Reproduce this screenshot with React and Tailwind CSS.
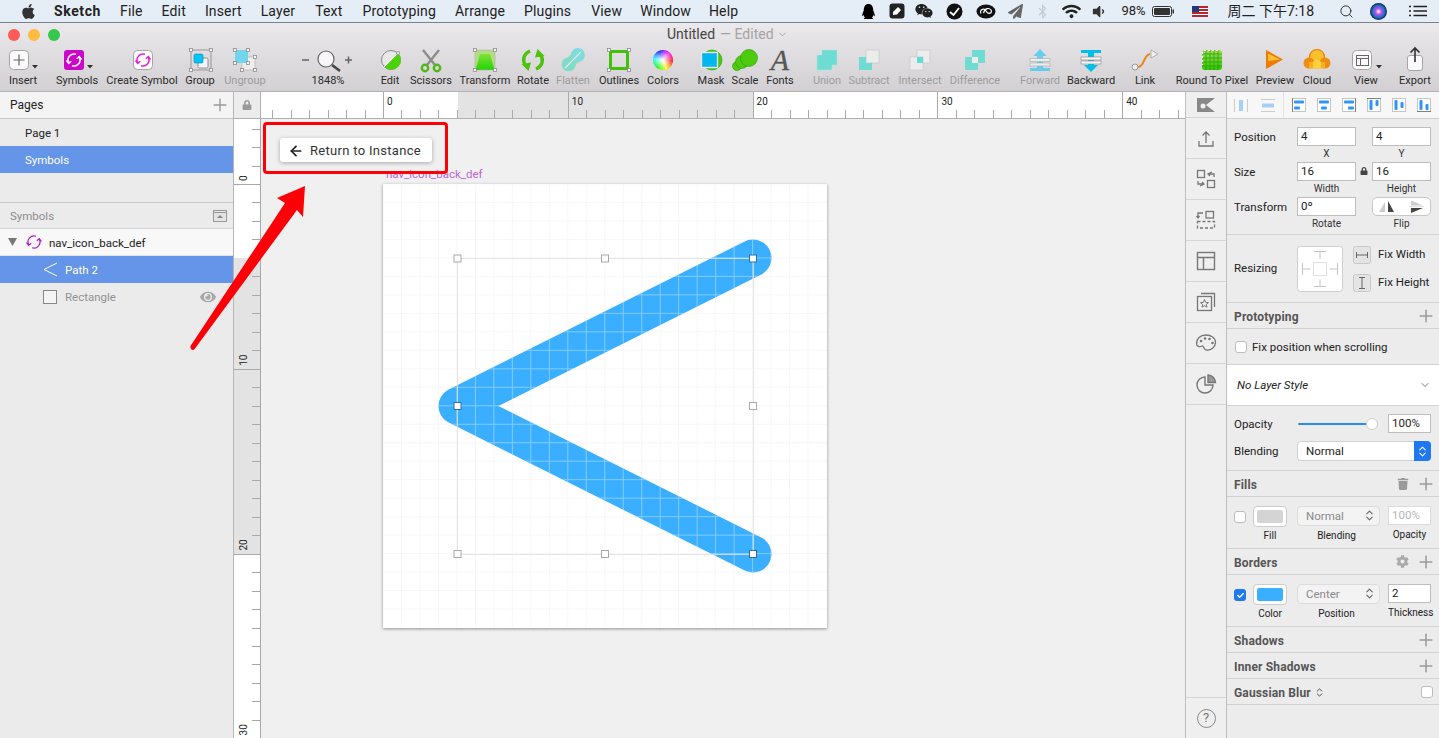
import React from "react";
import { FaApple, FaQq, FaWeixin, FaBluetoothB, FaPaperPlane, FaWifi, FaVolumeDown, FaTrash, FaCog, FaEye, FaLock, FaCheck } from "react-icons/fa";
import { Search, ArrowLeft, ChevronDown, Plus, ChevronsUpDown } from "lucide-react";

const Sync = ({ c = "#fff", w = 1.5 }) => (
  <g fill="none" stroke={c} strokeWidth={w}>
    <path d="M2 -5.7 A6 6 0 0 0 -5.4 2.5 M-7.5 0.5 L-5.3 3.4 L-2.800 1.200" />
    <path d="M-2 5.700 A6 6 0 0 0 5.400 -2.500 M7.500 -0.500 L5.300 -3.400 L2.800 -1.200" />
  </g>
);
const Tri = ({ x, y }) => <path d={`M${x - 3} ${y} h6 l-3 3.5z`} fill="#333" />;
const H = ({ x, y, s = 3 }) => <rect x={x - s / 2} y={y - s / 2} width={s} height={s} fill="#fff" stroke="#8a8a8a" strokeWidth="0.8" />;

const Ico = ({ children }) => (
  <svg width="40" height="26" viewBox="0 0 40 26" className="block shrink-0 overflow-visible">{children}</svg>
);

const wheel = Array.from({ length: 24 }, (_, i) => {
  const a0 = (i / 24) * 2 * Math.PI, a1 = ((i + 1.2) / 24) * 2 * Math.PI;
  return { d: `M20 12 L${20 + 10 * Math.cos(a0)} ${12 + 10 * Math.sin(a0)} A10 10 0 0 1 ${20 + 10 * Math.cos(a1)} ${12 + 10 * Math.sin(a1)}Z`, c: `hsl(${i * 15},95%,55%)` };
});

const icons = {
  insert: <Ico><rect x="6.5" y="2.5" width="19" height="19" rx="4" fill="#fbfbfb" stroke="#a5a5a5" /><path d="M16 6.5v11M10.5 12h11" stroke="#666" strokeWidth="1.2" /><Tri x={32} y={17} /></Ico>,
  symbols: <Ico><rect x="7" y="2" width="20" height="20" rx="3" fill="#cc07c9" /><g transform="translate(17 12)"><Sync /></g><Tri x={33} y={17} /></Ico>,
  create: <Ico><rect x="11.500" y="2.500" width="19" height="19" rx="4" fill="#fdfdfd" stroke="#a5a5a5" /><g transform="translate(21 12)"><Sync c="#e61fe0" /></g></Ico>,
  group: <Ico><rect x="11" y="2" width="20" height="20" fill="none" stroke="#888" strokeWidth="0.8" /><rect x="18" y="10" width="10" height="10" rx="1.5" fill="#f4f4f4" stroke="#777" strokeWidth="0.8" /><rect x="14" y="6" width="9" height="9" rx="1.5" fill="#00c6f8" stroke="#0a84a8" strokeWidth="0.6" /><H x={11} y={2} /><H x={31} y={2} /><H x={11} y={22} /><H x={31} y={22} /></Ico>,
  ungroup: <Ico><rect x="17" y="9" width="13" height="13" fill="#eeeeee" stroke="#bbb" strokeWidth="0.8" /><rect x="10" y="2" width="13" height="13" fill="#72d5ee" /><H x={10} y={2} /><H x={23} y={2} /><H x={23} y={15} /><H x={10} y={15} /><H x={30} y={9} /><H x={30} y={22} /><H x={17} y={22} /></Ico>,
  edit: <Ico><circle cx="21" cy="12" r="9.5" fill="#e8e8e8" stroke="#8a8a8a" /><path d="M28 5.5 A9.5 9.5 0 1 1 14.5 19 Z" fill="#4bd20a" /><path d="M14 19 L28 5" stroke="#fff" strokeWidth="1" /><H x={28} y={5} s={2.5} /></Ico>,
  scissors: <Ico><path d="M12 2 L24 17 M28 2 L16 17" stroke="#8d8d8d" strokeWidth="2.4" /><circle cx="14" cy="20" r="3.2" fill="none" stroke="#50b818" strokeWidth="2.4" /><circle cx="26" cy="20" r="3.2" fill="none" stroke="#50b818" strokeWidth="2.4" /></Ico>,
  transform: <Ico><defs><linearGradient id="tg" x1="0" y1="0" x2="0" y2="1"><stop offset="0" stopColor="#7ee03a" /><stop offset="1" stopColor="#22d400" /></linearGradient></defs><rect x="10" y="2" width="20" height="20" fill="#b5dc80" /><path d="M15 6 H25 L29.500 22 H10.500Z" fill="url(#tg)" /><rect x="10" y="2" width="20" height="20" fill="none" stroke="#a8a8a8" strokeWidth="0.5" /><H x={10} y={2} /><H x={30} y={2} /><H x={10} y={22} /><H x={30} y={22} /></Ico>,
  rotate: <Ico><path d="M17 3 C10 6 9 13 13 18" fill="none" stroke="#4cc20a" strokeWidth="3.4" /><path d="M8.500 16 L18 14.500 L15.500 23Z" fill="#4cc20a" /><path d="M23 21 C30 18 31 11 27 6" fill="none" stroke="#4cc20a" strokeWidth="3.4" /><path d="M31.500 8 L22 9.500 L24.500 1Z" fill="#4cc20a" /></Ico>,
  flatten: <Ico><g transform="rotate(-45 20 12)"><rect x="7" y="6.5" width="26" height="11" rx="5.5" fill="#9fdd9a" /><circle cx="14" cy="12" r="7" fill="#80dcc9" /><circle cx="27" cy="12" r="7" fill="#80dcdc" /><path d="M9 12h22" stroke="#e8f5ee" strokeWidth="1" /></g></Ico>,
  outlines: <Ico><rect x="11.5" y="3.5" width="17" height="17" fill="none" stroke="#3fc20a" strokeWidth="3" /><H x={10} y={2} /><H x={30} y={2} /><H x={10} y={22} /><H x={30} y={22} /></Ico>,
  colors: <Ico><defs><radialGradient id="cw"><stop offset="0" stopColor="#fff" stopOpacity="1" /><stop offset="1" stopColor="#fff" stopOpacity="0" /></radialGradient></defs>{wheel.map((s, i) => <path key={i} d={s.d} fill={s.c} />)}<circle cx="20" cy="12" r="10" fill="url(#cw)" /></Ico>,
  mask: <Ico><circle cx="21" cy="12" r="10" fill="#48c80f" stroke="#2e9c0a" strokeWidth="0.6" /><rect x="10.5" y="4.5" width="16" height="15" fill="#03b6ee" stroke="#e8e8e8" strokeWidth="1.4" /></Ico>,
  scale: <Ico><circle cx="12" cy="18" r="4.5" fill="#4ccb0f" stroke="#2e9c0a" strokeWidth="0.6" /><circle cx="17" cy="14" r="6.5" fill="#4ccb0f" stroke="#2e9c0a" strokeWidth="0.6" /><circle cx="24" cy="10" r="8.5" fill="#4ccb0f" stroke="#2e9c0a" strokeWidth="0.6" /></Ico>,
  fonts: <Ico><text x="20" y="22" textAnchor="middle" fontSize="30" fontStyle="italic" fontFamily="'Liberation Serif', serif" fill="#555" stroke="#555" strokeWidth="0.3">A</text></Ico>,
  union: <Ico><path d="M15 2 H30 V17 H25 V22 H10 V7 H15Z" fill="#6edcd2" stroke="#a8e8e2" strokeWidth="0.6" /></Ico>,
  subtract: <Ico><rect x="17" y="2" width="13" height="13" fill="#ececec" stroke="#c8c8c8" strokeWidth="0.7" /><path d="M10 9 H17 V15 H23 V22 H10Z" fill="#6edcd2" /></Ico>,
  intersect: <Ico><rect x="17" y="2" width="13" height="13" fill="#ececec" stroke="#c8c8c8" strokeWidth="0.7" /><rect x="10" y="9" width="13" height="13" fill="#ececec" stroke="#c8c8c8" strokeWidth="0.7" /><rect x="17" y="9" width="6" height="6" fill="#5cdcd2" /></Ico>,
  difference: <Ico><rect x="17" y="2" width="13" height="13" fill="#6edcd2" /><rect x="10" y="9" width="13" height="13" fill="#6edcd2" /><rect x="17" y="9" width="6" height="6" fill="#ececec" /></Ico>,
  forward: <Ico><path d="M20 1 L26.500 8 H23 V20 H17 V8 H13.500Z" fill="#66ccee" /><rect x="10" y="10.500" width="20" height="3" fill="#ececec" stroke="#aaa" strokeWidth="0.6" /><rect x="10" y="15" width="20" height="3" fill="#ececec" stroke="#aaa" strokeWidth="0.6" /><rect x="10" y="20" width="20" height="3" fill="#66ccee" /></Ico>,
  backward: <Ico><rect x="10" y="2" width="20" height="3" fill="#00bfe8" /><path d="M17 5 H23 V17 H27 L20 24 L13 17 H17Z" fill="#00bfe8" /><rect x="10" y="9" width="20" height="3" fill="#f4f4f4" stroke="#888" strokeWidth="0.6" /><rect x="10" y="13" width="20" height="3" fill="#f4f4f4" stroke="#888" strokeWidth="0.6" /></Ico>,
  link: <Ico><circle cx="10" cy="19" r="3" fill="#eee" stroke="#888" strokeWidth="0.8" /><path d="M13 19 C20 19 18 7 25 6" fill="none" stroke="#e8851a" strokeWidth="2" /><path d="M26 2 L33 6 L26 10Z" fill="#f2f2f2" stroke="#999" strokeWidth="0.7" /></Ico>,
  round: <Ico><defs><linearGradient id="rg" x1="0" y1="0" x2="0" y2="1"><stop offset="0" stopColor="#9ae050" /><stop offset="1" stopColor="#2cc800" /></linearGradient></defs><rect x="10" y="2" width="20" height="20" rx="3" fill="url(#rg)" />{[14, 18, 22, 26].map((v) => <path key={v} d={`M${v} 2V22M10 ${v - 8}H30`} stroke="#2c9a08" strokeWidth="0.7" />)}<path d="M12 2.500h16M10.500 4V17" stroke="#fff" strokeWidth="1.200" strokeDasharray="2 2" /></Ico>,
  preview: <Ico><path d="M11 2 L28 11.500 L11 21Z" fill="#ef7a05" /><path d="M13 5.500 L25 11.500 L13 13Z" fill="#fbc02d" /></Ico>,
  cloud: <Ico><circle cx="20" cy="9" r="7.500" fill="#fbc12d" stroke="#ee7a0a" strokeWidth="1.200" /><circle cx="12" cy="15" r="5.500" fill="#ef8c12" /><circle cx="28" cy="15" r="5.500" fill="#ef8c12" /><rect x="12" y="14" width="16" height="6.500" fill="#f8b020" /><path d="M16 20.500 H24 V14 C22 11 18 11 16 14Z" fill="#fbd040" /></Ico>,
  view: <Ico><rect x="6.500" y="2.500" width="19" height="19" rx="4" fill="#fbfbfb" stroke="#a5a5a5" /><rect x="10.500" y="7.500" width="12" height="10" fill="none" stroke="#666" /><path d="M10.500 10.500h12M14.500 10.500v7" stroke="#666" /><Tri x={33} y={17} /></Ico>,
  export: <Ico><rect x="12.500" y="7.500" width="15" height="15" rx="2.500" fill="#fbfbfb" stroke="#a5a5a5" /><path d="M20 0V14M15.500 4.500 L20 0 L24.500 4.500" fill="none" stroke="#333" strokeWidth="1.600" /></Ico>,
};

const Tool = ({ label, icon, cls, off }) => (
  <div className={`flex flex-col items-center ${cls}`}>
    <div className="flex h-[26px] items-center justify-center w-full">{icons[icon]}</div>
    <span className={`text-[11px] leading-[13px] whitespace-nowrap ${off ? "text-[#9c9c9c]" : "text-[#2a2a2a]"}`}>{label}</span>
  </div>
);

const MenuItem = ({ cls, b, children }) => <span className={`whitespace-nowrap ${b ? "font-bold" : ""} ${cls}`}>{children}</span>;

const AlignIcon = ({ t }) => {
  const Blue = (p) => <rect rx="1" fill="#2f95f5" {...p} />;
  const bars = {
    l: <><path d="M.5 0V14" stroke="#808080" /><Blue x="2" y="2.500" width="10" height="3" /><Blue x="2" y="8.500" width="6" height="3" /></>,
    c: <><Blue x="2" y="2.500" width="10" height="3" /><Blue x="4" y="8.500" width="6" height="3" /></>,
    r: <><path d="M13.500 0V14" stroke="#808080" /><Blue x="2" y="2.500" width="10" height="3" /><Blue x="6" y="8.500" width="6" height="3" /></>,
    t: <><path d="M0 .5H14" stroke="#808080" /><Blue x="2.500" y="2" width="3" height="10" /><Blue x="8.500" y="2" width="3" height="6" /></>,
    m: <><Blue x="2.500" y="2" width="3" height="10" /><Blue x="8.500" y="4" width="3" height="6" /></>,
    b: <><path d="M0 13.500H14" stroke="#808080" /><Blue x="2.500" y="2" width="3" height="10" /><Blue x="8.500" y="6" width="3" height="6" /></>,
  };
  return <svg width="14" height="14" viewBox="0 0 14 14" className="block shrink-0"><rect x=".5" y=".5" width="13" height="13" fill="#fff" stroke="#c6c6c6" />{bars[t]}</svg>;
};

const ruleXs = Array.from({ length: 51 }, (_, i) => i - 6);

const HRuler = () => (
  <svg width="924" height="26" className="block" shapeRendering="crispEdges">
    <rect x="197" y="0" width="296" height="26" fill="#e3e3e3" />
    {ruleXs.map((i) => {
      const x = Math.round(122 + i * 18.48) + 0.5;
      return <path key={i} d={`M${x} ${i % 10 === 0 ? 0 : 18}V26`} stroke="#a9a9a9" />;
    })}
    {[0, 10, 20, 30, 40].map((n) => (
      <text key={n} x={122 + n * 18.48 + 4} y="13" fontSize="10" fill="#222" fontFamily="Roboto, sans-serif">{n}</text>
    ))}
  </svg>
);

const VRuler = () => (
  <svg width="26" height="619" className="block" shapeRendering="crispEdges">
    <rect x="0" y="139" width="26" height="296" fill="#e3e3e3" />
    {Array.from({ length: 40 }, (_, i) => i - 3).map((i) => {
      const y = Math.round(65 + i * 18.48) + 0.5;
      return <path key={i} d={`M${i % 10 === 0 ? 0 : 18} ${y}H26`} stroke="#a9a9a9" />;
    })}
    {[0, 10, 20, 30].map((n) => {
      const y = 65 + n * 18.48 - 3;
      return <text key={n} x="13" y={y} fontSize="10" fill="#222" fontFamily="Roboto, sans-serif" transform={`rotate(-90 13 ${y})`}>{n}</text>;
    })}
  </svg>
);

const Handle = ({ x, y, p }) => (
  <rect x={x - 3.5} y={y - 3.5} width="7" height="7" fill="#fff" stroke={p ? "#2f6f9a" : "#a8a8a8"} strokeWidth="1" />
);

const Artboard = () => {
  const lines = Array.from({ length: 24 }, (_, i) => +(i * 18.48).toFixed(2));
  const shape = "M370 74 L74 222 L370 370";
  return (
    <svg width="444" height="444" className="block">
      <defs>
        <pattern id="gp" width="18.48" height="18.48" patternUnits="userSpaceOnUse" patternTransform="translate(-9.240 -9.240)">
          <path d="M9.240 0V18.480M0 9.240H18.480" stroke="#fff" strokeOpacity="0.38" strokeWidth="1" />
        </pattern>
      </defs>
      <rect width="444" height="444" fill="#fff" />
      {lines.map((v) => <path key={v} d={`M${v} 0V444M0 ${v}H444`} stroke="#f7f7f7" strokeWidth="1" />)}
      <path d={shape} fill="none" stroke="#3aaeff" strokeWidth="37" strokeLinecap="round" strokeLinejoin="round" />
      <path d={shape} fill="none" stroke="url(#gp)" strokeWidth="37" strokeLinecap="round" strokeLinejoin="round" />
      <rect x="74.500" y="74.500" width="296" height="296" fill="none" stroke="#e0e0e0" strokeOpacity="0.85" />
      <Handle x={74.5} y={74.5} />
      <Handle x={222} y={74.5} />
      <Handle x={370} y={74.5} p />
      <Handle x={74.5} y={222} p />
      <Handle x={370} y={222} />
      <Handle x={74.5} y={370} />
      <Handle x={222} y={370} />
      <Handle x={370} y={370} p />
    </svg>
  );
};

const Field = ({ v, cls = "w-[59px]", dim }) => (
  <div className={`h-[19px] border border-[#bdbdbd] bg-white pl-[3px] text-[11.5px] leading-[17px] ${dim ? "text-[#b5b5b5]" : "text-[#222]"} ${cls}`}>{v}</div>
);
const Sub = ({ children, cls = "w-[59px]" }) => <div className={`text-center text-[10px] leading-[16px] text-[#333] ${cls}`}>{children}</div>;

const Head = ({ title, extra }) => (
  <div className="flex h-[26px] items-center justify-between border-b border-[#d2d2d2] pl-[7px] pr-[3px]">
    <span className="pt-[2px] text-[12px] font-bold tracking-[0.15px] text-[#555]">{title}</span>
    <div className="flex items-center gap-[7px]">{extra}<Plus size={20} strokeWidth={1.8} className="text-[#9a9a9a]" /></div>
  </div>
);

const Select = ({ v, cls }) => (
  <div className={`relative h-[20px] rounded-[4px] border border-[#dcdcdc] bg-[#f3f3f3] pl-[8px] text-[11.5px] leading-[18px] text-[#8a8a8a] ${cls}`}>
    {v}
    <ChevronsUpDown size={13} className="absolute right-[3px] top-[2px] text-[#666]" />
  </div>
);

const strip = [
  <path d="M5 15V20H19V15M12 17V6M8.500 9.500L12 6L15.500 9.500" fill="none" stroke="#777" strokeWidth="1.300" />,
  <g fill="none" stroke="#777" strokeWidth="1.300"><rect x="3.500" y="3.500" width="7" height="7" /><rect x="13.500" y="13.500" width="7" height="7" /><path d="M14 7H20V10M18 5L14 7L16 9M10 17H4V14M6 19L10 17L8 15" /></g>,
  <g fill="none" stroke="#777" strokeWidth="1.300"><rect x="12" y="3.500" width="7.500" height="6.500" /><rect x="3.500" y="13.500" width="17" height="6.500" strokeDasharray="3 2" /><path d="M9 5H4V10M2.500 8L4 10L5.500 8" /></g>,
  <g fill="none" stroke="#777" strokeWidth="1.400"><rect x="3.500" y="3.500" width="17" height="17" /><path d="M3.500 8.500H20.500M9.500 8.500V20.500" /></g>,
  <g fill="none" stroke="#777" strokeWidth="1.300"><rect x="3.500" y="6.500" width="14" height="14" /><path d="M7 3.500H20.500V17" /><path d="M10.500 9.500L11.700 12.400L14.500 12.600L12.300 14.400L13 17.200L10.500 15.700L8 17.200L8.700 14.400L6.500 12.600L9.300 12.400Z" strokeWidth="1" /></g>,
  <g><path d="M12 4C6 4 2.500 8 2.500 12.500C2.500 16 6 16 8 15C10 14.500 9 18 12 19C17 20 21.500 16 21.500 11.500C21.500 7 17 4 12 4Z" fill="none" stroke="#777" strokeWidth="1.300" /><circle cx="7" cy="10" r="1.300" fill="#777" /><circle cx="11" cy="7.500" r="1.300" fill="#777" /><circle cx="15.500" cy="8" r="1.300" fill="#777" /><circle cx="18.500" cy="12" r="1.300" fill="#777" /></g>,
  <g fill="none" stroke="#777" strokeWidth="1.400"><path d="M11 5A8 8 0 1 0 19 13H11Z" /><path d="M14 3A8 8 0 0 1 21.500 10.500H14Z" fill="#999" /></g>,
];

const LeftPanel = () => (
  <aside className="flex w-[234px] shrink-0 flex-col border-r border-[#b5b5b5] bg-[#ebebeb] text-[11.5px] text-[#222]">
    <div className="flex h-[27px] items-center justify-between border-b border-[#c8c8c8] bg-[#f4f4f4] pl-[10px] pr-[3px]">
      <span className="text-[12px]">Pages</span>
      <Plus size={20} strokeWidth={1.6} className="text-[#999]" />
    </div>
    <div className="flex h-[27px] items-center pl-[25px] pt-[3px]">Page 1</div>
    <div className="flex h-[27px] items-center bg-[#6495e8] pl-[25px] pt-[3px] text-white">Symbols</div>
    <div className="h-[30px] border-b border-[#c8c8c8]" />
    <div className="flex h-[26px] items-center justify-between border-b border-[#d4d4d4] pl-[10px] pr-[6px] text-[#8c8c8c]">
      <span className="pt-[2px]">Symbols</span>
      <svg width="14" height="12" viewBox="0 0 14 12"><rect x="0.500" y="0.500" width="13" height="11" fill="#e4e4e4" stroke="#999" /><path d="M0.500 2.500H13.500" stroke="#999" /><path d="M4 8L7 5L10 8Z" fill="#888" /></svg>
    </div>
    <div className="flex h-[27px] items-center border-b border-[#e2e2e2] bg-[#f8f8f8] pl-[8px]">
      <svg width="9" height="8" viewBox="0 0 9 8" className="shrink-0"><path d="M0 0H9L4.500 8Z" fill="#777" /></svg>
      <svg width="16" height="16" viewBox="-8 -8 16 16" className="ml-[9px] shrink-0"><Sync c="#a81ac8" w={1.200} /></svg>
      <span className="ml-[7px] pt-[3px]">nav_icon_back_def</span>
    </div>
    <div className="flex h-[27px] items-center bg-[#6495e8] pl-[43px] text-white">
      <svg width="15" height="15" viewBox="0 0 15 15" className="shrink-0"><path d="M14 1L1 7.500L14 14" fill="none" stroke="#fff" strokeWidth="1" /></svg>
      <span className="ml-[7px] pt-[2px]">Path 2</span>
    </div>
    <div className="flex h-[27px] items-center justify-between pl-[43px] pr-[17px] text-[#929292]">
      <div className="flex items-center">
        <span className="h-[14px] w-[14px] border border-[#888] bg-[#f4f4f4]" />
        <span className="ml-[8px] pt-[2px]">Rectangle</span>
      </div>
      <FaEye size={16} className="text-[#a8a8a8]" />
    </div>
  </aside>
);

const Inspector = () => (
  <aside className="flex w-[212px] shrink-0 flex-col bg-[#ececec] text-[11.5px] text-[#222]">
    <div className="flex h-[27px] items-center border-b border-[#cfcfcf] bg-[#f7f7f7]">
      <svg width="14" height="13" viewBox="0 0 14 13" className="ml-[7px] shrink-0"><path d="M.5 0V13M13.500 0V13" stroke="#ccc" /><rect x="5" y="1" width="4" height="11" fill="#a5cff5" /></svg>
      <svg width="14" height="13" viewBox="0 0 14 13" className="ml-[13px] shrink-0"><path d="M0 .5H14M0 12.500H14" stroke="#ccc" /><rect x="1" y="4.500" width="12" height="4" fill="#a5cff5" /></svg>
      <span className="ml-[8px] h-[26px] w-px bg-[#e2e2e2]" />
      <div className="ml-[8px] flex gap-[11px]">
        {["l", "c", "r", "t", "m", "b"].map((t) => <AlignIcon key={t} t={t} />)}
      </div>
    </div>

    <div className="flex h-[116px] flex-col border-b border-[#d2d2d2] pl-[7px] pt-[8px]">
      <div className="flex">
        <div className="w-[63px] pt-[2px]">Position</div>
        <div><Field v="4" /><Sub>X</Sub></div>
        <div className="ml-[16px]"><Field v="4" /><Sub>Y</Sub></div>
      </div>
      <div className="flex">
        <div className="w-[63px] pt-[2px]">Size</div>
        <div><Field v="16" /><Sub>Width</Sub></div>
        <div className="flex w-[16px] justify-center pt-[5px]"><FaLock size={8} className="text-[#444]" /></div>
        <div><Field v="16" /><Sub>Height</Sub></div>
      </div>
      <div className="flex">
        <div className="w-[63px] pt-[2px]">Transform</div>
        <div><Field v="0º" /><Sub>Rotate</Sub></div>
        <div className="ml-[16px]">
          <div className="flex h-[19px] w-[59px] items-center rounded-[5px] border border-[#c6c6c6] bg-white">
            <svg width="29" height="16" viewBox="0 0 29 16" className="shrink-0"><path d="M12 3V13H6Z" fill="#ccc" /><path d="M15 2V13H21Z" fill="#444" /></svg>
            <span className="h-full w-px bg-[#d6d6d6]" />
            <svg width="28" height="16" viewBox="0 0 28 16" className="shrink-0"><path d="M9 1.500L21 6.500H9Z" fill="#ccc" /><path d="M9 9H21L9 14Z" fill="#444" /><path d="M7 7.700H22" stroke="#ccc" strokeWidth="0.700" /></svg>
          </div>
          <Sub>Flip</Sub>
        </div>
      </div>
    </div>

    <div className="flex h-[68px] items-center border-b border-[#d2d2d2] pl-[7px]">
      <div className="w-[63px] pt-[1px]">Resizing</div>
      <svg width="46" height="46" viewBox="0 0 46 46" className="shrink-0">
        <rect x=".5" y=".5" width="45" height="45" rx="3" fill="#fff" stroke="#cfcfcf" />
        <rect x="16.500" y="16.500" width="13" height="13" fill="#fff" stroke="#e0e0e0" />
        <path d="M17 5.500H29M23 5.500V13M17 40.500H29M23 33V40.500M5.500 17V29M5.500 23H13M40.500 17V29M33 23H40.500" stroke="#c4c4c4" />
      </svg>
      <div className="ml-[10px] flex flex-col gap-[10px]">
        <div className="flex h-[18px] items-center">
          <svg width="18" height="18" viewBox="0 0 18 18" className="shrink-0"><rect x=".5" y=".5" width="17" height="17" rx="2" fill="#e4e4e4" stroke="#c8c8c8" /><path d="M3.500 6V12M14.500 6V12M3.500 9H14.500" stroke="#666" /></svg>
          <span className="ml-[7px] whitespace-nowrap leading-[15px]">Fix Width</span>
        </div>
        <div className="flex h-[18px] items-center">
          <svg width="18" height="18" viewBox="0 0 18 18" className="shrink-0"><rect x=".5" y=".5" width="17" height="17" rx="2" fill="#e4e4e4" stroke="#c8c8c8" /><path d="M6 3.500H12M6 14.500H12M9 3.500V14.500" stroke="#666" /></svg>
          <span className="ml-[7px] whitespace-nowrap leading-[15px]">Fix Height</span>
        </div>
      </div>
    </div>

    <Head title="Prototyping" />
    <div className="flex h-[36px] items-center border-b border-[#d2d2d2] pl-[8px]">
      <span className="h-[12px] w-[12px] rounded-[3px] border border-[#bdbdbd] bg-white" />
      <span className="ml-[5px] whitespace-nowrap pt-[2px]">Fix position when scrolling</span>
    </div>
    <div className="flex h-[41px] items-center justify-between border-b border-[#d2d2d2] bg-white pl-[10px] pr-[8px]">
      <span className="pt-[2px] italic">No Layer Style</span>
      <ChevronDown size={12} className="text-[#777]" />
    </div>

    <div className="flex h-[65px] flex-col gap-[8px] border-b border-[#d2d2d2] pl-[7px] pt-[8px]">
      <div className="flex h-[19px] items-center">
        <div className="w-[64px] pt-[3px]">Opacity</div>
        <div className="relative h-[2px] w-[76px] rounded-full bg-[#2c8af0]">
          <span className="absolute -right-[4px] -top-[5px] h-[12px] w-[12px] rounded-full border border-[#cfcfcf] bg-white" />
        </div>
        <Field v="100%" cls="ml-[14px] w-[43px]" />
      </div>
      <div className="flex h-[20px] items-center">
        <div className="w-[63px] pt-[2px]">Blending</div>
        <div className="relative h-[20px] w-[134px] rounded-[4px] border border-[#d0d0d0] bg-white pl-[8px] leading-[18px]">
          Normal
          <span className="absolute -right-px -top-px flex h-[20px] w-[17px] items-center justify-center rounded-r-[4px] bg-[#1d78f2]">
            <ChevronsUpDown size={13} className="text-white" />
          </span>
        </div>
      </div>
    </div>

    <Head title="Fills" extra={<FaTrash size={12} className="text-[#9a9a9a]" />} />
    <div className="flex h-[52px] border-b border-[#d2d2d2] pl-[7px] pt-[9px]">
      <span className="mt-[5px] h-[12px] w-[12px] shrink-0 rounded-[3px] border border-[#bdbdbd] bg-white" />
      <div className="ml-[7px] w-[34px] shrink-0">
        <div className="h-[21px] rounded-[4px] border border-[#cccccc] bg-white p-[3px]"><div className="h-full rounded-[2px] bg-[#d4d4d4]" /></div>
        <div className="mt-[3px] text-center text-[10px] leading-[12px]">Fill</div>
      </div>
      <div className="ml-[10px] w-[83px] shrink-0">
        <Select v="Normal" />
        <div className="mt-[4px] pr-[4px] text-center text-[10px] leading-[12px]">Blending</div>
      </div>
      <div className="ml-[8px] w-[43px] shrink-0">
        <Field v="100%" cls="w-[43px] border-[#dcdcdc]" dim />
        <div className="mt-[4px] text-center text-[10px] leading-[12px]">Opacity</div>
      </div>
    </div>

    <Head title="Borders" extra={<FaCog size={13} className="text-[#aaa]" />} />
    <div className="flex h-[52px] border-b border-[#d2d2d2] pl-[7px] pt-[9px]">
      <span className="mt-[5px] flex h-[12px] w-[12px] shrink-0 items-center justify-center rounded-[3px] bg-[#1d78f2]"><FaCheck size={7} className="text-white" /></span>
      <div className="ml-[7px] w-[34px] shrink-0">
        <div className="h-[21px] rounded-[4px] border border-[#cccccc] bg-white p-[3px]"><div className="h-full rounded-[2px] bg-[#3aaeff]" /></div>
        <div className="mt-[3px] text-center text-[10px] leading-[12px]">Color</div>
      </div>
      <div className="ml-[10px] w-[83px] shrink-0">
        <Select v="Center" />
        <div className="mt-[4px] pr-[4px] text-center text-[10px] leading-[12px]">Position</div>
      </div>
      <div className="ml-[8px] w-[43px] shrink-0">
        <Field v="2" cls="w-[43px]" />
        <div className="mt-[4px] whitespace-nowrap text-center text-[10px] leading-[12px]">Thickness</div>
      </div>
    </div>

    <Head title="Shadows" />
    <Head title="Inner Shadows" />
    <div className="flex h-[26px] items-center justify-between border-b border-[#d2d2d2] pl-[7px] pr-[6px]">
      <span className="flex items-center gap-[3px] pt-[2px] text-[12px] font-bold tracking-[0.15px] text-[#555]">Gaussian Blur <ChevronsUpDown size={11} className="text-[#444]" /></span>
      <span className="h-[12px] w-[12px] rounded-[3px] border border-[#bdbdbd] bg-white" />
    </div>
  </aside>
);

export default function App() {
  return (
    <div className="relative flex h-[738px] w-[1439px] flex-col overflow-hidden bg-[#ececec] font-['Roboto','Noto_Sans_CJK_SC',sans-serif]">
      {/* macOS menu bar */}
      <div className="flex h-[23px] shrink-0 items-center border-b border-[#75848f] bg-[#e5edf6] text-[14px] tracking-[0.15px] text-[#222]">
        <FaApple size={17} className="ml-[20px] shrink-0 text-[#333]" />
        <MenuItem b cls="ml-[17px] tracking-[0.6px]">Sketch</MenuItem>
        <MenuItem cls="ml-[19px]">File</MenuItem>
        <MenuItem cls="ml-[19px]">Edit</MenuItem>
        <MenuItem cls="ml-[19px]">Insert</MenuItem>
        <MenuItem cls="ml-[19px]">Layer</MenuItem>
        <MenuItem cls="ml-[20px]">Text</MenuItem>
        <MenuItem cls="ml-[20px]">Prototyping</MenuItem>
        <MenuItem cls="ml-[19px]">Arrange</MenuItem>
        <MenuItem cls="ml-[19px]">Plugins</MenuItem>
        <MenuItem cls="ml-[20px]">View</MenuItem>
        <MenuItem cls="ml-[18px]">Window</MenuItem>
        <MenuItem cls="ml-[18px]">Help</MenuItem>
        <div className="ml-auto flex items-center pr-[12px] tracking-normal">
          <FaQq size={15} className="text-black" />
          <svg width="16" height="16" viewBox="0 0 16 16" className="ml-[13px]"><rect x="0.500" y="0.500" width="15" height="15" rx="3" fill="#222" /><path d="M4 9L9 4L12 7L8 11.500L4 12Z" fill="#fff" /></svg>
          <FaWeixin size={18} className="ml-[10px] text-[#222]" />
          <svg width="17" height="17" viewBox="0 0 17 17" className="ml-[13px]"><circle cx="8.500" cy="8.500" r="8" fill="#111" /><path d="M4 9L7.500 12L13 5" fill="none" stroke="#fff" strokeWidth="1.800" /></svg>
          <svg width="20" height="15" viewBox="0 0 20 15" className="ml-[13px]"><ellipse cx="10" cy="7.500" rx="9.500" ry="7" fill="#111" /><path d="M5 9.500C3 6 8 3.500 10 7C12 11 17 9 15 6C13 3.500 9 4 7.500 9" fill="none" stroke="#fff" strokeWidth="1.200" /></svg>
          <FaPaperPlane size={15} className="ml-[12px] text-[#666]" />
          <FaBluetoothB size={15} className="ml-[12px] text-[#c6cbd2]" />
          <FaWifi size={19} className="ml-[12px] text-[#222]" />
          <FaVolumeDown size={15} className="ml-[10px] text-[#333]" />
          <span className="ml-[15px] text-[13px]">98%</span>
          <svg width="22" height="11" viewBox="0 0 22 11" className="ml-[6px]"><rect x="0.500" y="0.500" width="19" height="10" rx="2" fill="none" stroke="#333" /><rect x="2" y="2" width="16" height="7" rx="1" fill="#333" /><rect x="20.500" y="3.500" width="1.500" height="4" fill="#333" /></svg>
          <svg width="16" height="11" viewBox="0 0 16 11" className="ml-[18px]"><rect width="16" height="11" fill="#b6272f" /><path d="M0 2.500H16M0 5.500H16M0 8.500H16" stroke="#fff" strokeWidth="1" /><rect width="7" height="6" fill="#233a80" /></svg>
          <span className="ml-[20px] whitespace-nowrap text-[14px]">周二 下午7:18</span>
          <Search size={15} strokeWidth={1.6} className="ml-[25px] text-[#333]" />
          <svg width="17" height="17" viewBox="0 0 17 17" className="ml-[16px]"><defs><radialGradient id="siri"><stop offset="0" stopColor="#fff" /><stop offset="0.350" stopColor="#c050e8" /><stop offset="0.700" stopColor="#2070d0" /><stop offset="1" stopColor="#12223f" /></radialGradient></defs><circle cx="8.500" cy="8.500" r="8.500" fill="url(#siri)" /></svg>
          <svg width="18" height="12" viewBox="0 0 18 12" className="ml-[22px]"><path d="M0 1.500H2M0 6H2M0 10.500H2M4.500 1.500H18M4.500 6H18M4.500 10.500H18" stroke="#222" strokeWidth="1.600" /></svg>
        </div>
      </div>

      {/* Window toolbar */}
      <div className="h-[69px] shrink-0 border-b border-[#b3b1b3] bg-gradient-to-b from-[#ebe9eb] to-[#d2d0d2]">
        <div className="relative flex h-[25px] items-center pb-[2px] pl-[8px]">
          <div className="flex gap-[8px]">
            <span className="h-[12px] w-[12px] rounded-full bg-[#fc5b57]" />
            <span className="h-[12px] w-[12px] rounded-full bg-[#fdbc40]" />
            <span className="h-[12px] w-[12px] rounded-full bg-[#35c84a]" />
          </div>
          <div className="absolute left-[667px] flex items-center whitespace-nowrap text-[14px] text-[#444]">
            Untitled<span className="ml-[5px] text-[#a5a3a5]">— Edited</span>
            <ChevronDown size={11} className="ml-[3px] text-[#a5a3a5]" />
          </div>
        </div>
        <div className="flex">
          <Tool label="Insert" icon="insert" cls="ml-[3px] w-[40px]" />
          <Tool label="Symbols" icon="symbols" cls="ml-[9px] w-[50px]" />
          <Tool label="Create Symbol" icon="create" cls="ml-[2px] w-[76px]" />
          <Tool label="Group" icon="group" cls="ml-[3px] w-[34px]" />
          <Tool label="Ungroup" icon="ungroup" off cls="ml-[6px] w-[44px]" />
          <div className="ml-[31px] flex w-[60px] flex-col items-center">
            <div className="flex h-[26px] w-full items-center justify-center">
              <svg width="60" height="26" viewBox="0 0 60 26" className="block shrink-0">
                <path d="M4 12H11M47 12H54M50.500 8.500V15.500" stroke="#666" strokeWidth="1.500" />
                <path d="M34 17L42 23" stroke="#444" strokeWidth="2.600" />
                <circle cx="28" cy="11" r="8" fill="#f7f7f7" stroke="#666" strokeWidth="1.200" />
              </svg>
            </div>
            <span className="text-[11px] leading-[13px] text-[#2a2a2a]">1848%</span>
          </div>
          <Tool label="Edit" icon="edit" cls="ml-[17px] w-[30px]" />
          <Tool label="Scissors" icon="scissors" cls="ml-[4px] w-[44px]" />
          <Tool label="Transform" icon="transform" cls="ml-[6px] w-[52px]" />
          <Tool label="Rotate" icon="rotate" cls="ml-[4px] w-[36px]" />
          <Tool label="Flatten" icon="flatten" off cls="ml-[4px] w-[36px]" />
          <Tool label="Outlines" icon="outlines" cls="ml-[7px] w-[42px]" />
          <Tool label="Colors" icon="colors" cls="ml-[6px] w-[34px]" />
          <Tool label="Mask" icon="mask" cls="ml-[16px] w-[30px]" />
          <Tool label="Scale" icon="scale" cls="ml-[4px] w-[30px]" />
          <Tool label="Fonts" icon="fonts" cls="ml-[5px] w-[30px]" />
          <Tool label="Union" icon="union" off cls="ml-[15px] w-[34px]" />
          <Tool label="Subtract" icon="subtract" off cls="ml-[3px] w-[44px]" />
          <Tool label="Intersect" icon="intersect" off cls="ml-[6px] w-[46px]" />
          <Tool label="Difference" icon="difference" off cls="ml-[5px] w-[54px]" />
          <Tool label="Forward" icon="forward" off cls="ml-[16px] w-[44px]" />
          <Tool label="Backward" icon="backward" cls="ml-[4px] w-[50px]" />
          <Tool label="Link" icon="link" cls="ml-[16px] w-[26px]" />
          <Tool label="Round To Pixel" icon="round" cls="ml-[16px] w-[76px]" />
          <Tool label="Preview" icon="preview" cls="ml-[5px] w-[40px]" />
          <Tool label="Cloud" icon="cloud" cls="ml-[6px] w-[32px]" />
          <Tool label="View" icon="view" cls="ml-[18px] w-[30px]" />
          <Tool label="Export" icon="export" cls="ml-[16px] w-[36px]" />
        </div>
      </div>

      {/* Body */}
      <div className="flex min-h-0 flex-1">
        <LeftPanel />

        <div className="flex w-[951px] shrink-0 flex-col">
          <div className="flex h-[27px] shrink-0 border-b border-[#b0b0b0] bg-white">
            <div className="flex w-[27px] shrink-0 items-center justify-center border-r border-[#b0b0b0] bg-[#ececec]">
              <FaLock size={10} className="text-[#9a9a9a]" />
            </div>
            <HRuler />
          </div>
          <div className="flex min-h-0 flex-1">
            <div className="w-[27px] shrink-0 border-r border-[#a9a9a9] bg-white"><VRuler /></div>
            <div className="relative w-[924px] shrink-0 bg-[#f0f0f0]">
              <div className="absolute left-[125px] top-[48px] whitespace-nowrap text-[11.5px] leading-[14px] text-[#bf63d9]">nav_icon_back_def</div>
              <div className="absolute left-[122px] top-[65px] shadow-[0_1px_3px_rgba(0,0,0,0.4)]"><Artboard /></div>
              <div className="absolute left-[19px] top-[19px] flex h-[24px] w-[152px] items-center rounded-[3px] bg-white pl-[8px] pt-[1px] text-[13px] tracking-[0.3px] text-[#333] shadow-[0_1px_4px_rgba(0,0,0,0.3)]">
                <ArrowLeft size={16} strokeWidth={2.6} className="shrink-0 text-[#222]" />
                <span className="ml-[6px] whitespace-nowrap">Return to Instance</span>
              </div>
              <div className="absolute left-[2px] top-[3px] h-[52px] w-[185px] rounded-[4px] border-[3px] border-[#fb0007]" />
            </div>
          </div>
        </div>

        {/* Right icon strip */}
        <div className="flex w-[42px] shrink-0 flex-col border-x border-[#bdbdbd] bg-[#efefef]">
          <div className="flex h-[26px] items-center justify-center border-b border-[#d6d6d6]">
            <svg width="18" height="14" viewBox="0 0 18 14"><path d="M0 0H18L9 7L18 14H0Z" fill="#888" /><circle cx="6" cy="8" r="2.500" fill="#efefef" /></svg>
          </div>
          {strip.map((g, i) => (
            <div key={i} className="flex h-[41px] items-center justify-center border-b border-[#d6d6d6]">
              <svg width="24" height="24" viewBox="0 0 24 24">{g}</svg>
            </div>
          ))}
          <div className="flex-1" />
          <div className="flex h-[41px] items-center justify-center border-t border-[#d6d6d6]">
            <span className="flex h-[19px] w-[19px] items-center justify-center rounded-full border border-[#888] text-[13px] text-[#777]">?</span>
          </div>
        </div>

        <Inspector />
      </div>

      {/* Annotation arrow */}
      <svg width="1439" height="738" className="pointer-events-none absolute left-0 top-0">
        <path d="M305 186 L277 198 L285 203 L190.500 346 Q190 349 192.500 350 Q194 350 195 348.500 L297 210 L303 217Z" fill="#fb0007" />
      </svg>
    </div>
  );
}
